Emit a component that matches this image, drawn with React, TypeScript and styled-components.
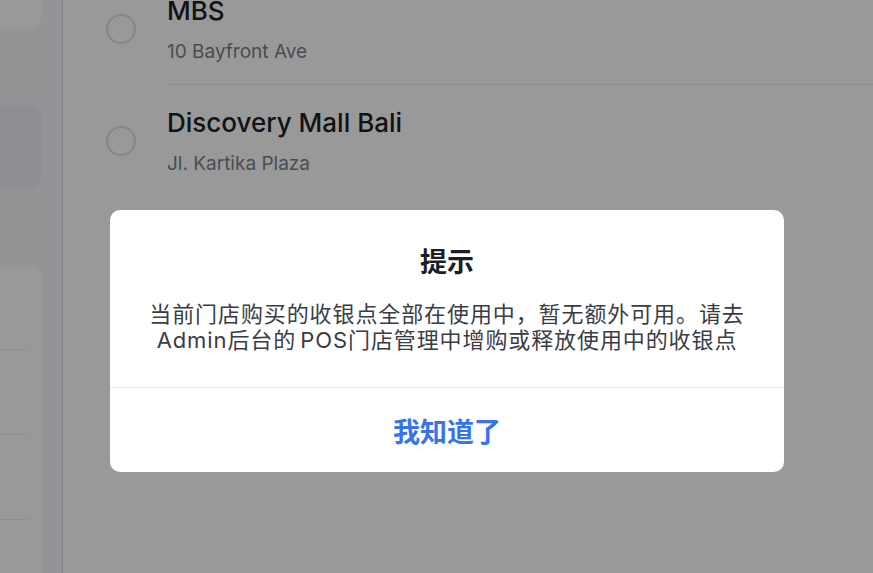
import React from "react";
import styled, { createGlobalStyle } from "styled-components";

const GlobalStyle = createGlobalStyle`
  html, body { margin: 0; padding: 0; height: 100%; }
  body {
    font-family: Inter, "Noto Sans CJK SC", "Noto Sans", sans-serif;
    background: #ffffff;
    overflow: hidden;
  }
  #root { height: 100%; }
`;

const Screen = styled.div`
  position: relative;
  display: flex;
  width: 100%;
  height: 100vh;
  overflow: hidden;
  background: #ffffff;
`;

const Sidebar = styled.aside`
  flex: 0 0 63px;
  display: flex;
  flex-direction: column;
  gap: 77px;
  padding-right: 21px;
  box-sizing: border-box;
  background: #f6f7fa;
  border-right: 1px solid #dde0e9;
  overflow: hidden;
`;

const SideCard = styled.div<{ $selected?: boolean; $offset?: number }>`
  flex: 0 0 auto;
  height: 83px;
  margin-left: -12px;
  margin-top: ${(p) => (p.$offset ? `${p.$offset}px` : "0")};
  border-radius: 10px;
  background: ${(p) => (p.$selected ? "#eceef3" : "#ffffff")};
`;

const SideList = styled.div`
  flex: 0 0 auto;
  margin-left: -12px;
  border-radius: 10px;
  background: #ffffff;
  display: flex;
  flex-direction: column;
  padding-right: 13px;
`;

const SideRow = styled.div`
  height: 84px;
  border-bottom: 1px solid #eceef2;
`;

const Main = styled.main`
  flex: 1;
  display: flex;
  flex-direction: column;
  margin-top: -27px;
`;

const StoreRow = styled.div`
  display: flex;
  align-items: center;
  gap: 31px;
  padding-left: 43px;
`;

const Radio = styled.span`
  flex: 0 0 auto;
  width: 30px;
  height: 30px;
  box-sizing: border-box;
  border-radius: 50%;
  border: 2px solid #dcdee3;
`;

const StoreInfo = styled.div<{ $divider?: boolean }>`
  flex: 1;
  display: flex;
  flex-direction: column;
  gap: 14px;
  padding: 22px 0 21px;
  border-bottom: ${(p) => (p.$divider ? "1px solid #eeeeee" : "1px solid transparent")};
`;

const StoreName = styled.div`
  font-size: 26px;
  line-height: 32px;
  font-weight: 500;
  color: #202124;
`;

const StoreAddr = styled.div`
  font-size: 19px;
  line-height: 22px;
  color: #7b7f8a;
`;

const Overlay = styled.div`
  position: absolute;
  inset: 0;
  background: rgba(0, 0, 0, 0.4);
  display: flex;
  align-items: center;
  justify-content: center;
  padding: 109px 0 0 21px;
  box-sizing: border-box;
`;

const Dialog = styled.div`
  width: 674px;
  background: #ffffff;
  border-radius: 10px;
  overflow: hidden;
  display: flex;
  flex-direction: column;
`;

const DialogBody = styled.div`
  padding: 34px 30px 34px;
  display: flex;
  flex-direction: column;
  align-items: center;
  gap: 23px;
  border-bottom: 1px solid #e9e9ec;
`;

const DialogTitle = styled.div`
  font-family: "Noto Sans CJK SC", sans-serif;
  font-size: 27px;
  line-height: 34px;
  font-weight: 700;
  color: #1d1e22;
`;

const DialogText = styled.div`
  font-family: Inter, "Noto Sans CJK SC", sans-serif;
  font-size: 22px;
  line-height: 26px;
  letter-spacing: 0.9px;
  color: #3a3d44;
  text-align: center;
`;

const ThinSpace = styled.span`
  letter-spacing: -2px;
`;

const DialogButton = styled.button`
  height: 84px;
  border: none;
  background: transparent;
  font-family: "Noto Sans CJK SC", sans-serif;
  font-size: 27px;
  font-weight: 700;
  color: #3873ee;
  cursor: pointer;
`;

const stores = [
  { name: "MBS", addr: "10 Bayfront Ave" },
  { name: "Discovery Mall Bali", addr: "Jl. Kartika Plaza" },
];

export default function App() {
  return (
    <>
      <GlobalStyle />
      <Screen>
        <Sidebar>
          <SideCard $offset={-55} />
          <SideCard $selected />
          <SideList>
            <SideRow />
            <SideRow />
            <SideRow />
            <SideRow />
          </SideList>
        </Sidebar>
        <Main>
          {stores.map((s, i) => (
            <StoreRow key={s.name}>
              <Radio />
              <StoreInfo $divider={i === 0}>
                <StoreName>{s.name}</StoreName>
                <StoreAddr>{s.addr}</StoreAddr>
              </StoreInfo>
            </StoreRow>
          ))}
        </Main>
        <Overlay>
          <Dialog>
            <DialogBody>
              <DialogTitle>提示</DialogTitle>
              <DialogText>
                当前门店购买的收银点全部在使用中，暂无额外可用。请去
                <br />
                Admin后台的<ThinSpace> </ThinSpace>POS门店管理中增购或释放使用中的收银点
              </DialogText>
            </DialogBody>
            <DialogButton>我知道了</DialogButton>
          </Dialog>
        </Overlay>
      </Screen>
    </>
  );
}
